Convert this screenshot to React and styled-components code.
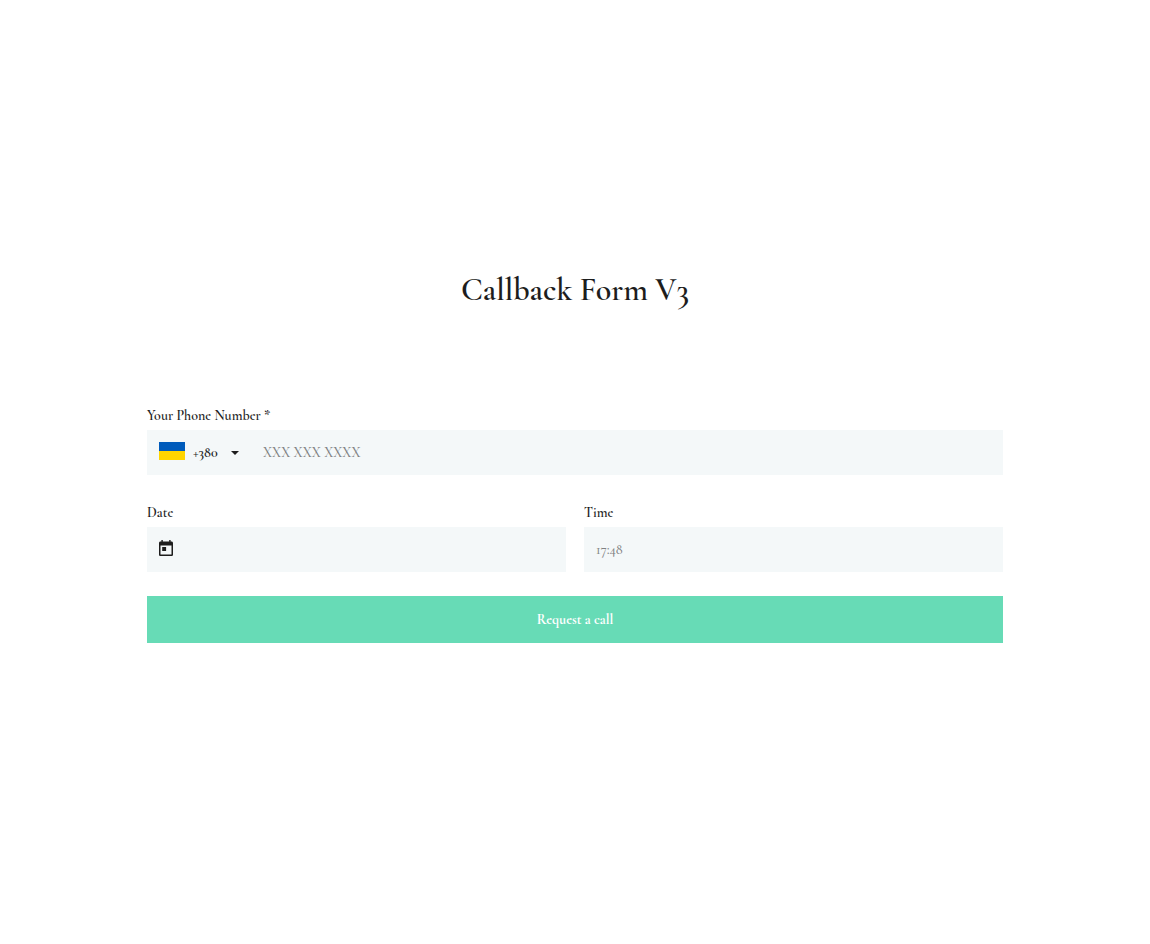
import React from "react";
import styled, { createGlobalStyle } from "styled-components";

const GlobalStyle = createGlobalStyle`
  *, *::before, *::after { box-sizing: border-box; }
  body {
    margin: 0;
    background: #fff;
    color: #1d1d1d;
    font-family: "Cormorant Garamond", "Liberation Serif", "Times New Roman", serif;
  }
`;

const Page = styled.main`
  display: flex;
  flex-direction: column;
  align-items: center;
  padding: 270px 20px;
`;

const Title = styled.h1`
  margin: 0 0 94px;
  font-size: 32px;
  line-height: 40px;
  font-weight: 600;
  text-align: center;
`;

const Form = styled.form`
  display: flex;
  flex-direction: column;
  gap: 24px;
  width: 100%;
  max-width: 856px;
`;

const Columns = styled.div`
  display: grid;
  grid-template-columns: 1fr 1fr;
  gap: 18px;
  padding-top: 2px;
`;

const Field = styled.div`
  display: flex;
  flex-direction: column;
  gap: 2px;
  min-width: 0;
`;

const Label = styled.label`
  font-size: 14px;
  line-height: 24px;
  font-weight: 600;
`;

const Control = styled.div`
  display: flex;
  align-items: center;
  height: 45px;
  padding: 0 12px;
  background: #f4f8f9;
`;

const Input = styled.input`
  flex: 1;
  min-width: 0;
  height: 100%;
  padding: 0;
  border: 0;
  outline: 0;
  background: transparent;
  color: inherit;
  font: inherit;
  font-size: 14px;
  font-weight: 500;

  &::placeholder {
    color: #808283;
    opacity: 1;
  }
`;

const Country = styled.div`
  display: flex;
  align-items: center;
  gap: 8px;
  margin-right: 24px;
`;

const Flag = styled.svg`
  display: block;
  width: 26px;
  height: 18px;
  margin-bottom: 3px;
`;

const CodeSelect = styled.select`
  appearance: none;
  width: 30px;
  height: 24px;
  padding: 0;
  border: 0;
  outline: 0;
  background: transparent;
  color: inherit;
  font: inherit;
  font-size: 14px;
  font-weight: 600;
`;

const Caret = styled.svg`
  display: block;
  width: 8px;
  height: 4px;
`;

const CalendarIcon = styled.svg`
  display: block;
  width: 14px;
  height: 16px;
  margin-right: 12px;
  margin-bottom: 3px;
`;

const SubmitButton = styled.button`
  height: 47px;
  border: 0;
  background: #67dbb6;
  color: #fff;
  font: inherit;
  font-size: 14px;
  font-weight: 700;
  cursor: pointer;
`;

export default function App() {
  return (
    <>
      <GlobalStyle />
      <Page>
        <Title>Callback Form V3</Title>
        <Form onSubmit={(e) => e.preventDefault()}>
          <Field>
            <Label htmlFor="phone">Your Phone Number *</Label>
            <Control>
              <Country>
                <Flag viewBox="0 0 26 18" aria-hidden="true">
                  <path fill="#005bbb" d="M0 0h26v9H0z" />
                  <path fill="#ffd500" d="M0 9h26v9H0z" />
                </Flag>
                <CodeSelect aria-label="Country code" defaultValue="+380">
                  <option>+380</option>
                </CodeSelect>
                <Caret viewBox="0 0 8 4" aria-hidden="true">
                  <path fill="#1d1d1d" d="M0 0h8L4 4z" />
                </Caret>
              </Country>
              <Input id="phone" type="tel" placeholder="XXX XXX XXXX" required />
            </Control>
          </Field>
          <Columns>
            <Field>
              <Label htmlFor="date">Date</Label>
              <Control>
                <CalendarIcon viewBox="0 0 14 16" aria-hidden="true">
                  <path
                    fill="#1d1d1d"
                    fillRule="evenodd"
                    d="M2.4 0h1.4v1.6h6.4V0h1.4v1.6h.8C13.4 1.6 14 2.2 14 3.1v11.3c0 .9-.6 1.6-1.6 1.6H1.6C.6 16 0 15.3 0 14.4V3.1C0 2.2.6 1.6 1.6 1.6h.8zM1.5 5.5v8.9h11V5.5zM3.2 7h3.9v4H3.2z"
                  />
                </CalendarIcon>
                <Input id="date" type="text" />
              </Control>
            </Field>
            <Field>
              <Label htmlFor="time">Time</Label>
              <Control>
                <Input id="time" type="text" placeholder="17:48" />
              </Control>
            </Field>
          </Columns>
          <SubmitButton type="submit">Request a call</SubmitButton>
        </Form>
      </Page>
    </>
  );
}
